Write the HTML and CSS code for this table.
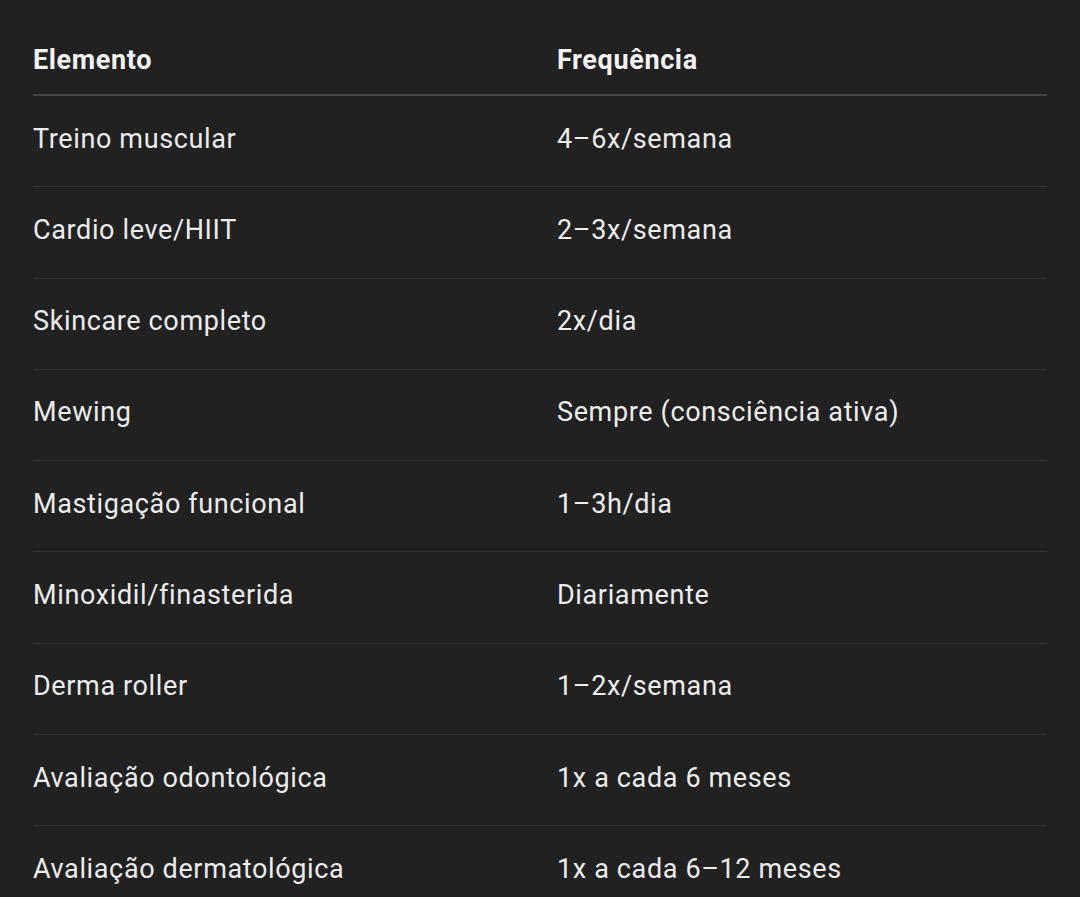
FILE: index.html
```html
<!DOCTYPE html>
<html lang="pt">
<head>
<meta charset="utf-8">
<link rel="stylesheet" href="styles.css">
</head>
<body>
<div class="page">
<table class="tbl">
<thead>
<tr><th class="c1">Elemento</th><th>Frequência</th></tr>
</thead>
<tbody>
<tr><td class="c1">Treino muscular</td><td>4–6x/semana</td></tr>
<tr><td class="c1">Cardio leve/HIIT</td><td>2–3x/semana</td></tr>
<tr><td class="c1">Skincare completo</td><td>2x/dia</td></tr>
<tr><td class="c1">Mewing</td><td>Sempre (consciência ativa)</td></tr>
<tr><td class="c1">Mastigação funcional</td><td>1–3h/dia</td></tr>
<tr><td class="c1">Minoxidil/finasterida</td><td>Diariamente</td></tr>
<tr><td class="c1">Derma roller</td><td>1–2x/semana</td></tr>
<tr><td class="c1">Avaliação odontológica</td><td>1x a cada 6 meses</td></tr>
<tr><td class="c1">Avaliação dermatológica</td><td>1x a cada 6–12 meses</td></tr>
</tbody>
</table>
</div>
</body>
</html>
```

FILE: styles.css
```css
html, body {
  margin: 0;
  padding: 0;
  background: #212121;
  height: 100%;
  overflow: hidden;
}
.page {
  padding: 28px 33px 0 33px;
  font-family: Roboto, "Liberation Sans", sans-serif;
  color: #ececec;
}
.tbl {
  width: 1014px;
  border-collapse: collapse;
  font-size: 27px;
  letter-spacing: 0.63px;
}
.tbl th {
  text-align: left;
  font-weight: 700;
  color: #f4f4f4;
  line-height: 39px;
  padding: 13.3px 0 13.7px 0;
  border-bottom: 2px solid #474747;
}
.tbl td {
  line-height: 39px;
  padding: 23.6px 0 27.69px 0;
  border-bottom: 1px solid #333333;
  color: #ececec;
}
.tbl .c1 {
  width: 524px;
}
```
